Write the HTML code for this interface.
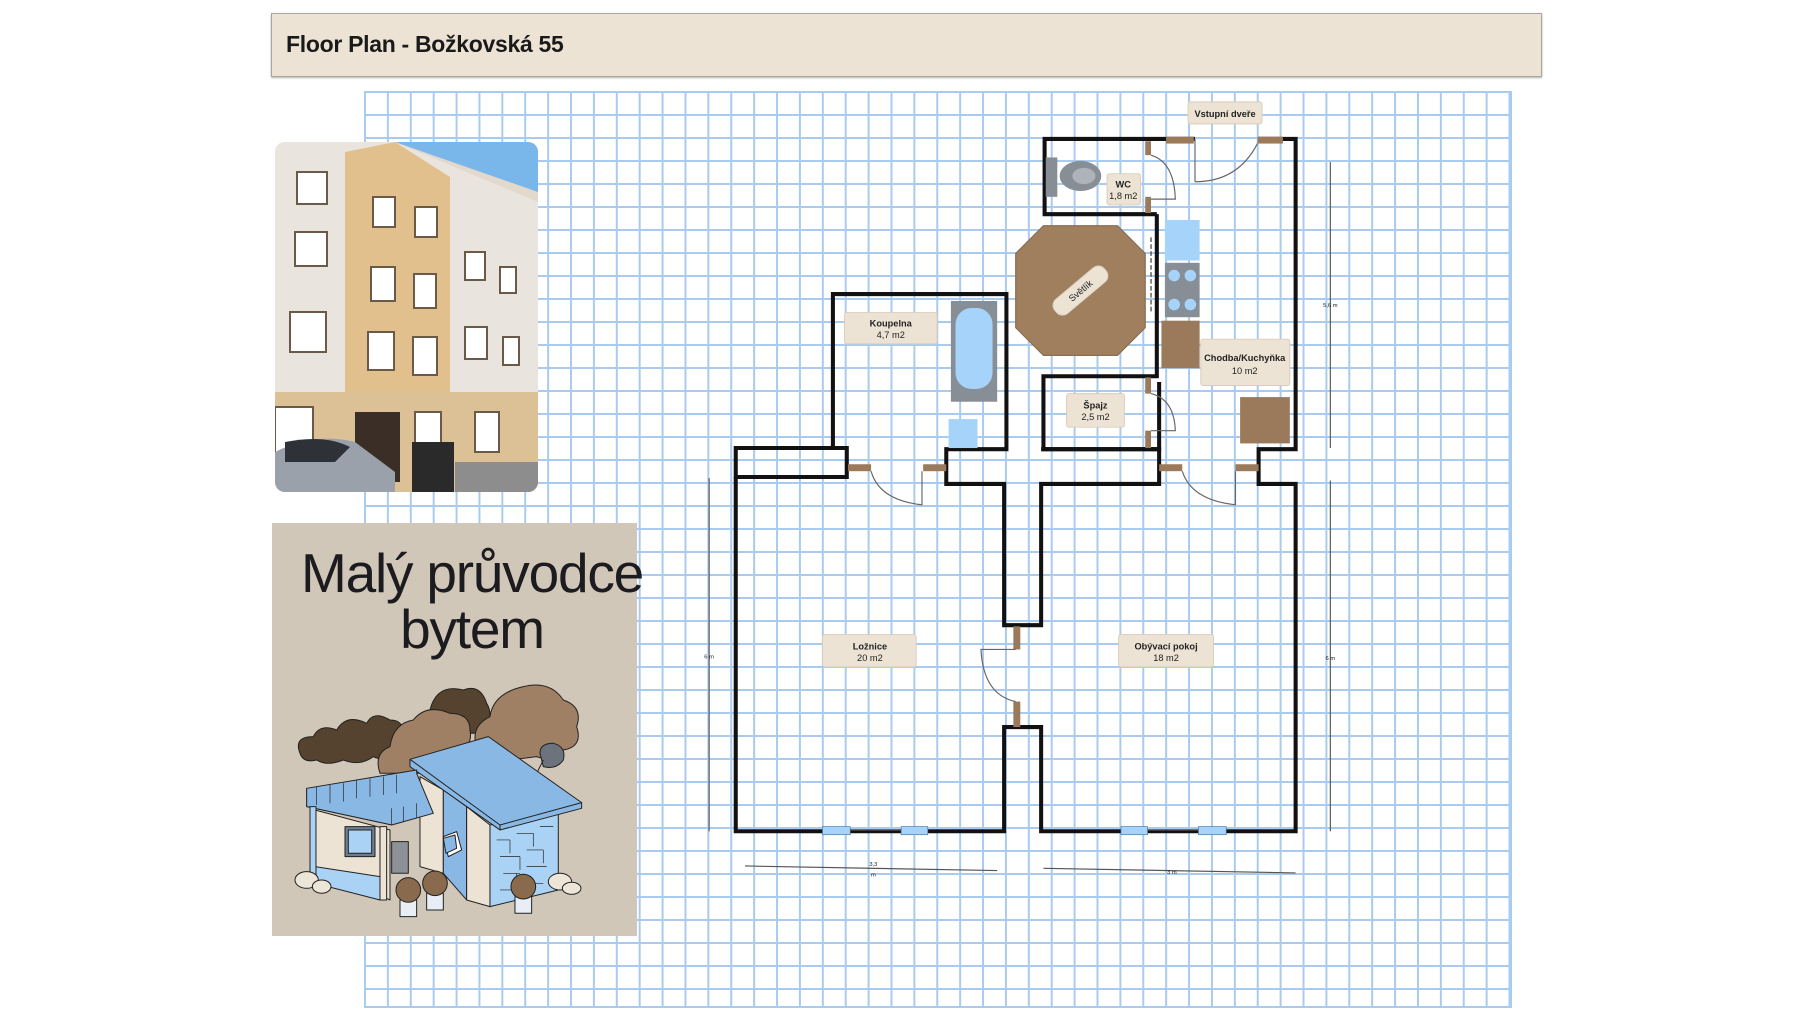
<!DOCTYPE html>
<html><head><meta charset="utf-8"><style>
html,body{margin:0;padding:0;width:1800px;height:1013px;background:#fff;overflow:hidden;font-family:"Liberation Sans","DejaVu Sans",sans-serif;}
#hdr{position:absolute;left:271px;top:13px;width:1269px;height:62px;background:#ece3d4;border:1px solid #a9a49c;box-shadow:0 1px 2px rgba(0,0,0,.3);}
#hdr span{position:absolute;left:14px;top:17px;font-size:23px;font-weight:bold;color:#1a1a1a;letter-spacing:-0.3px}
#grid{position:absolute;left:364px;top:91px;width:1148px;height:917px;
background-image:linear-gradient(to right,#a9cbef 2px,transparent 2px),linear-gradient(to bottom,#a9cbef 2px,transparent 2px);
background-size:22.9px 23px;border-right:2px solid #a9cbef;border-bottom:2px solid #a9cbef;box-sizing:border-box}
#card{position:absolute;left:272px;top:523px;width:365px;height:413px;background:#d1c7b8}
#card .t{position:absolute;left:-5px;top:22px;width:410px;text-align:center;font-size:55px;line-height:56px;color:#1c1c20;letter-spacing:-1.2px;z-index:2}
svg{position:absolute;left:0;top:0}
</style></head><body>
<div id="hdr"><span>Floor Plan - Božkovská 55</span></div>
<div id="grid"></div>

<!-- photo -->
<svg style="left:275px;top:142px" width="263" height="350" viewBox="0 0 263 350">
<defs><clipPath id="pc"><rect width="263" height="350" rx="10"/></clipPath></defs>
<g clip-path="url(#pc)">
<rect width="263" height="350" fill="#e2d9cc"/>
<polygon points="120,0 263,0 263,50" fill="#79b6ea"/>
<polygon points="0,0 120,0 263,60 263,350 0,350" fill="#e9e5de"/>
<polygon points="70,10 120,0 175,35 175,300 70,300" fill="#e2c08e"/>
<rect x="0" y="250" width="263" height="100" fill="#dcc096"/>
<rect x="80" y="270" width="45" height="70" fill="#3a2e26"/>
<g fill="#fff" stroke="#6b5a48" stroke-width="2">
<rect x="22" y="30" width="30" height="32"/><rect x="20" y="90" width="32" height="34"/><rect x="15" y="170" width="36" height="40"/>
<rect x="98" y="55" width="22" height="30"/><rect x="140" y="65" width="22" height="30"/>
<rect x="96" y="125" width="24" height="34"/><rect x="139" y="132" width="22" height="34"/>
<rect x="93" y="190" width="26" height="38"/><rect x="138" y="195" width="24" height="38"/>
<rect x="190" y="110" width="20" height="28"/><rect x="225" y="125" width="16" height="26"/>
<rect x="190" y="185" width="22" height="32"/><rect x="228" y="195" width="16" height="28"/>
<rect x="0" y="265" width="38" height="50"/><rect x="140" y="270" width="26" height="44"/><rect x="200" y="270" width="24" height="40"/>
</g>
<path d="M0 310 Q40 290 80 300 L120 330 L120 350 L0 350Z" fill="#9aa1aa"/>
<path d="M10 300 Q50 292 75 305 L60 320 L10 320Z" fill="#2e3238"/>
<rect x="137" y="300" width="42" height="50" fill="#2a2a2a"/>
<rect x="180" y="320" width="83" height="30" fill="#8d8d8d"/>
</g></svg>

<div id="card"><div class="t">Malý průvodce<br>bytem</div>
<svg style="left:0;top:0" width="365" height="413" viewBox="0 0 365 413">
<g transform="translate(-2,-3) scale(0.3333)" stroke="#222" stroke-width="3" stroke-linejoin="round">
<path d="M440 640 q-10-60 40-70 q20-80 100-60 q50-20 70 40 q20 30 0 90z" fill="#56432f"/>
<path d="M90 700 q-20-50 40-50 q20-40 70-20 q30-50 90-20 q20-40 70-10 q60 0 30 90 q-40 40-80 20 q-40 30-90 10 q-50 20-80 0 q-40 10-50-20z" fill="#56432f"/>
<path d="M330 760 q-20-60 30-80 q10-70 70-80 q40-50 110-20 q60 0 60 50 q10 50-40 70 l-50 60z" fill="#a08064"/>
<path d="M620 680 q-20-60 40-90 q10-70 100-90 q80-20 120 40 q60 20 40 80 q20 60-40 70 q-20 40-80 20 l-80 10 q-60 10-100-40z" fill="#a08064"/>
<path d="M810 700 q0-30 40-30 q40 10 30 50 q-20 30-60 20z" fill="#6c737c"/>
<path d="M820 720 q-10 20 -20 40" fill="none"/>
<polygon points="450,770 520,810 520,1060 450,1040" fill="#ede3d4"/>
<polygon points="520,810 590,860 590,1140 520,1060" fill="#8ab8e4"/>
<polygon points="590,860 660,915 660,1160 590,1140" fill="#ede3d4"/>
<polygon points="660,915 865,870 865,1110 660,1160" fill="#a9d2f4"/>
<g stroke-width="2" fill="none"><path d="M680 960 h40 M740 940 h50 M810 920 h40 M690 1010 h60 M770 990 h50 M700 1060 h50 M770 1040 h60 M690 1110 h50 M760 1090 h60 M720 960 v40 M790 940 v40 M750 1010 v40 M820 990 v40 M740 1060 v40"/></g>
<polygon points="420,718 655,650 935,848 935,865 690,930 420,740" fill="#8ab8e4"/>
<path d="M420,718 L690,915 L935,848 M690,915 L690,930" fill="none"/>
<polygon points="135,870 360,930 360,1140 135,1040" fill="#ede3d4"/>
<polygon points="135,1040 330,1070 330,1140 135,1090" fill="#a9d2f4"/>
<rect x="225" y="920" width="90" height="90" fill="#6b7e94"/><rect x="235" y="930" width="70" height="70" fill="#a9d2f4"/>
<rect x="365" y="965" width="50" height="95" fill="#8c9198"/>
<polygon points="110,805 440,750 440,760 490,880 365,915 110,860" fill="#8ab8e4"/>
<path d="M110 805 v55 M140 800 v55 M180 795 v55 M220 790 v55 M260 780 v55 M300 775 v55 M340 770 v55 M380 765 v55 M110 860 L365 915 M365 915 v-50 M400 905 v-45 M440 895 v-45" fill="none" stroke-width="2"/>
<rect x="120" y="860" width="18" height="240" fill="#a9d2f4"/>
<rect x="330" y="920" width="20" height="220" fill="#ede3d4"/>
<polygon points="520,950 560,935 575,990 535,1010" fill="#fff"/><polygon points="520,955 555,945 560,985 528,1000" fill="#8ab8e4"/>
<ellipse cx="110" cy="1080" rx="35" ry="25" fill="#ede5d8"/><ellipse cx="155" cy="1100" rx="28" ry="20" fill="#ede5d8"/>
<ellipse cx="870" cy="1085" rx="35" ry="25" fill="#ede5d8"/><ellipse cx="905" cy="1105" rx="28" ry="18" fill="#ede5d8"/>
<rect x="390" y="1140" width="50" height="50" fill="#e8eef5"/><circle cx="415" cy="1110" r="37" fill="#8a6a4c"/>
<rect x="470" y="1120" width="50" height="50" fill="#e8eef5"/><circle cx="495" cy="1090" r="37" fill="#8a6a4c"/>
<rect x="735" y="1130" width="50" height="50" fill="#e8eef5"/><circle cx="760" cy="1100" r="37" fill="#8a6a4c"/>
</g></svg></div>

<svg width="1800" height="1013" viewBox="0 0 1556 875" preserveAspectRatio="none">
<path d="M902 195 H966 L990 219 V283 L966 307 H902 L878 283 V219 Z" fill="#9f7f5d" stroke="#8a6d4f" stroke-width="1"/>
<g fill="none" stroke="#111" stroke-width="3.5" stroke-linejoin="miter">
<path d="M636 387 H732 V412 H636 Z"/>
<path d="M636 412 V718 H868 V628 H900 V718 H1120 V418 H1088 V388 H1120 V120 H1088"/>
<path d="M1033 120 H903 V185 H1000"/>
<path d="M720 387 V254 H870 V388 H818 V418 H868 V540 H900 V418 H1002 V388 H900"/>
<path d="M1000 185 V325 H902 V388 H1002 V330"/>
</g>
<g fill="#9a7a5a">
<rect x="733" y="401" width="20" height="6"/><rect x="798" y="401" width="20" height="6"/>
<rect x="1002" y="401" width="20" height="6"/><rect x="1068" y="401" width="20" height="6"/>
<rect x="1008" y="118" width="24" height="6"/><rect x="1087" y="118" width="22" height="6"/>
<rect x="990" y="122" width="5" height="12"/><rect x="990" y="170" width="5" height="14"/>
<rect x="990" y="326" width="5" height="14"/><rect x="990" y="372" width="5" height="15"/>
<rect x="876" y="541" width="6" height="20"/><rect x="876" y="606" width="6" height="22"/>
<rect x="1004" y="277" width="33" height="41"/><rect x="1072" y="343" width="43" height="40"/>
</g>
<g fill="none" stroke="#666" stroke-width="1">
<path d="M753 407 Q760 432 797 436 V407"/><path d="M1022 407 Q1030 432 1068 436 V407"/>
<path d="M1033 157 Q1070 157 1087 124 M1033 120 V157"/>
<path d="M995 134 Q1015 140 1016 172 H995"/><path d="M995 340 Q1015 345 1016 372 H995"/>
<path d="M878 561 H848 Q850 600 878 606"/>
<path d="M995 205 V270" stroke="#333" stroke-dasharray="4 2"/>
</g>
<g fill="#888e96"><rect x="904" y="136" width="10" height="34"/><ellipse cx="934" cy="152" rx="18" ry="13"/>
<rect x="822" y="260" width="40" height="87"/><rect x="1007" y="227" width="30" height="47"/></g>
<ellipse cx="937" cy="152" rx="10" ry="7" fill="#aeb3ba"/>
<rect x="826" y="266" width="32" height="70" rx="14" fill="#a6d3fa"/>
<rect x="1007" y="190" width="30" height="35" fill="#a6d3fa"/><rect x="820" y="362" width="25" height="25" fill="#a6d3fa"/>
<g fill="#a6d3fa"><circle cx="1015" cy="238" r="5"/><circle cx="1029" cy="238" r="5"/><circle cx="1015" cy="263" r="5"/><circle cx="1029" cy="263" r="5"/></g>
<g fill="#a6d3fa" stroke="#4a7aa8" stroke-width=".6">
<rect x="711" y="714" width="24" height="7"/><rect x="779" y="714" width="23" height="7"/>
<rect x="969" y="714" width="23" height="7"/><rect x="1036" y="714" width="24" height="7"/></g>
<g stroke="#555" stroke-width="1" fill="none">
<path d="M735 717 H779 M992 717 H1036"/>
<path d="M613 413 V718 M1150 140 V387 M1150 415 V718 M644 748 L862 752 M902 750 L1120 754"/>
</g>
<g fill="#ece3d4" stroke="#d9cdb9" stroke-width=".8">
<rect x="1027" y="88" width="64" height="19" rx="2"/><rect x="957" y="150" width="29" height="27" rx="2"/>
<rect x="730" y="270" width="80" height="27" rx="2"/><rect x="1038" y="293" width="77" height="40" rx="2"/>
<rect x="922" y="340" width="50" height="29" rx="2"/><rect x="711" y="548" width="81" height="28" rx="2"/>
<rect x="967" y="548" width="82" height="28" rx="2"/>
<rect x="-28" y="-8" width="56" height="16" rx="7" transform="translate(934 251) rotate(-40)"/>
</g>
<g font-family="Liberation Sans, sans-serif" font-size="8" fill="#222" text-anchor="middle">
<text x="1059" y="101" font-weight="bold">Vstupní dveře</text>
<text x="971" y="162" font-weight="bold">WC</text><text x="971" y="172">1,8 m2</text>
<text x="770" y="282" font-weight="bold">Koupelna</text><text x="770" y="292">4,7 m2</text>
<text x="1076" y="312" font-weight="bold">Chodba/Kuchyňka</text><text x="1076" y="323">10 m2</text>
<text x="947" y="353" font-weight="bold">Špajz</text><text x="947" y="363">2,5 m2</text>
<text x="752" y="561" font-weight="bold">Ložnice</text><text x="752" y="571">20 m2</text>
<text x="1008" y="561" font-weight="bold">Obývací pokoj</text><text x="1008" y="571">18 m2</text>
<text x="934" y="254" transform="rotate(-40 934 251)">Světlík</text>
<g font-size="5"><text x="613" y="569">6 m</text><text x="1150" y="265">5,6 m</text><text x="1150" y="570">6 m</text><text x="755" y="748">3,3</text><text x="755" y="757">m</text><text x="1013" y="755">3 m</text></g>
</g>
</svg>
</body></html>
